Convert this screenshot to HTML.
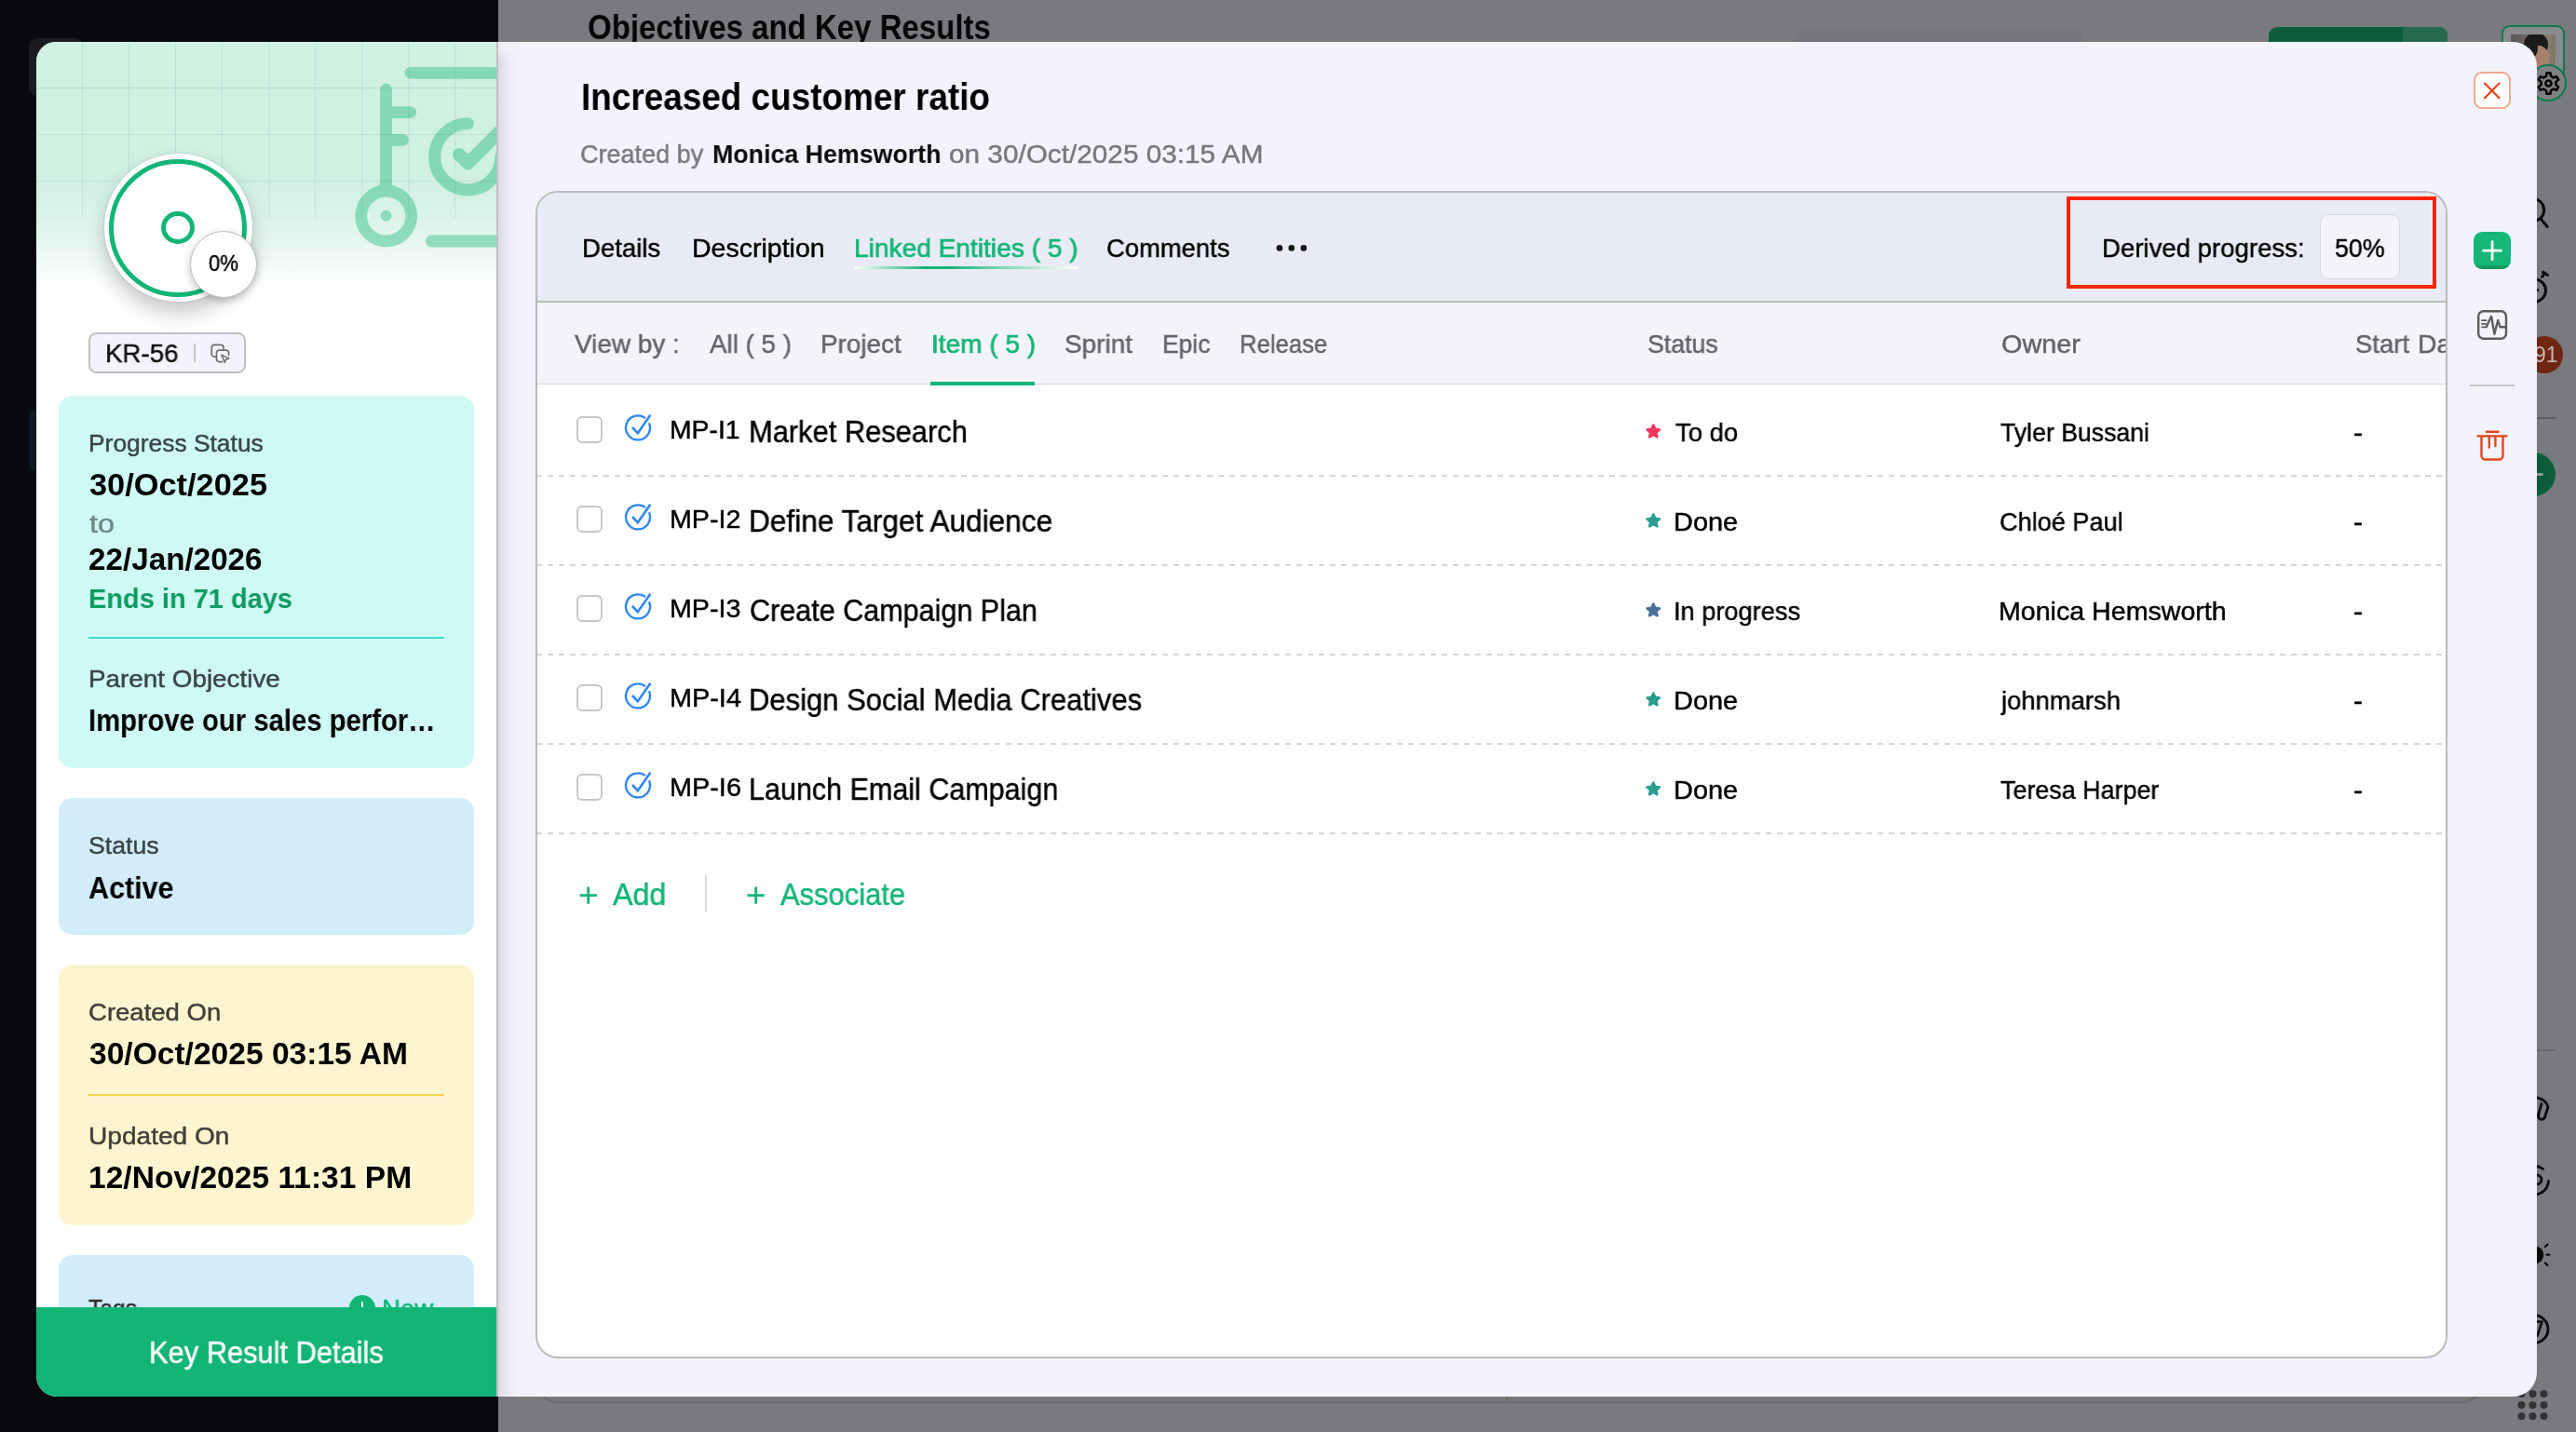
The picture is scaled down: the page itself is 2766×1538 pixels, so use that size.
<!DOCTYPE html>
<html><head><meta charset="utf-8"><title>Key Result</title>
<style>
html,body{margin:0;padding:0;background:#797a7e;}
body{width:2766px;height:1538px;overflow:hidden;position:relative;font-family:"Liberation Sans",sans-serif;}
*{box-sizing:border-box;}
.a{position:absolute;}
.g{position:absolute;width:2766px;height:1538px;}
.t{position:absolute;white-space:nowrap;line-height:1;transform-origin:0 0;will-change:transform;}
svg{position:absolute;overflow:visible;}
.dash{position:absolute;left:577px;width:2051px;height:2px;background:repeating-linear-gradient(90deg,#d5d5d5 0,#d5d5d5 6px,transparent 6px,transparent 12px);background-position:-1px 0;}
.cb{position:absolute;left:618.9px;top:447.2px;width:28px;height:28.6px;border:2.3px solid #c6c6c6;border-radius:6px;background:#fff;}
</style></head>
<body>
<!-- ======== underlying page (darkened by overlay) ======== -->
<div class="a" style="left:0;top:0;width:534.7px;height:1538px;background:#08090f;"></div>
<div class="a" style="left:31.1px;top:40.7px;width:60.3px;height:63.4px;border-radius:11px;background:#1a1b20;"></div>
<div class="a" style="left:31.2px;top:437.8px;width:20px;height:69.7px;border-radius:10px 0 0 10px;background:#0c1822;"></div>
<span id="t0" class="t" style="left:630.69px;top:12.26px;font-size:36.2px;color:#050505;font-weight:700;transform:scaleX(0.9119);">Objectives and Key Results</span>
<div class="a" style="left:1929px;top:30px;width:307px;height:40px;border-radius:10px;background:#75767a;"></div>
<div class="a" style="left:2436px;top:29px;width:192px;height:40px;border-radius:9px;background:#0d5c3a;overflow:hidden;">
  <div class="a" style="left:144px;top:0;width:48px;height:40px;background:#27694e;"></div>
</div>
<!-- avatar -->
<div class="a" style="left:2686px;top:27px;width:68px;height:74px;border-radius:9px;border:2.2px solid #0e7a4c;background:#8a8b8e;"></div>
<div class="a" style="left:2696.3px;top:37.2px;width:47.6px;height:60px;background:linear-gradient(90deg,#5f5757 0%,#6a6261 30%,#8c8172 75%,#7d7468 100%);overflow:hidden;">
  <div class="a" style="left:14px;top:-2px;width:26px;height:26px;border-radius:50%;background:#1d1a1b;"></div>
  <div class="a" style="left:17px;top:12px;width:24px;height:30px;border-radius:45%;background:#a8806c;"></div>
  <div class="a" style="left:13px;top:4px;width:16px;height:22px;border-radius:50%;background:#1d1a1b;"></div>
</div>
<div class="a" style="left:2716px;top:69px;width:40px;height:40px;border-radius:50%;border:2.4px solid #0e7a4c;background:#808083;"></div>
<svg style="left:2716.5px;top:69.8px;" width="39" height="39" viewBox="0 0 42 42" fill="none" stroke="#050505" stroke-width="2.8" stroke-linejoin="round"><path d="M18.20 12.87 L18.88 8.99 L23.12 8.99 L23.80 12.87 L26.64 14.51 L30.35 13.16 L32.46 16.83 L29.44 19.36 L29.44 22.64 L32.46 25.17 L30.35 28.84 L26.64 27.49 L23.80 29.13 L23.12 33.01 L18.88 33.01 L18.20 29.13 L15.36 27.49 L11.65 28.84 L9.54 25.17 L12.56 22.64 L12.56 19.36 L9.54 16.83 L11.65 13.16 L15.36 14.51Z"/><circle cx="21" cy="21" r="3.3"/></svg>
<!-- right rail icons (only slivers visible) -->
<svg style="left:0;top:0;" width="2766" height="460" viewBox="0 0 2766 460" fill="none" stroke="#0a0a0a" stroke-width="3" stroke-linecap="round"><circle cx="2719.7" cy="225.5" r="12"/><path d="M2728 234.8L2735.2 243.5"/><circle cx="2721.5" cy="312" r="12"/><path d="M2729.5 297.5L2732.5 293M2730.5 292.2L2735.5 295.4"/><circle cx="2725" cy="311.5" r="1.4" fill="#0a0a0a" stroke="none"/></svg>
<div class="a" style="left:2711.7px;top:360.9px;width:40.2px;height:40.2px;border-radius:50%;background:#6f2612;"></div>
<span class="t" style="left:2720.9px;top:369.9px;font-size:23px;color:#c9b3ad;">91</span>
<div class="a" style="left:2724px;top:447.8px;width:19.7px;height:2px;background:#5c5d60;"></div>
<div class="a" style="left:2697px;top:485.5px;width:47px;height:47px;border-radius:50%;background:radial-gradient(circle at 40% 50%,#0a5234 0%,#0d5e3c 70%,#0b5737 100%);"></div>
<div class="a" style="left:2723px;top:507.8px;width:8.2px;height:3px;border-radius:1.5px;background:#8e9e96;"></div>
<div class="a" style="left:2724px;top:1127px;width:20px;height:2px;background:#66676b;"></div>
<svg style="left:0;top:1100px;" width="2766" height="438" viewBox="0 1100 2766 438" fill="none" stroke="#0a0a0a" stroke-width="2.8" stroke-linecap="round" stroke-linejoin="round">
<path d="M2712 1180c9-4 22 0 24 9l-3.5 11c-2 4-7.5 2.500-7-2.500l3.500-12"/>
<path d="M2730.500 1255.500A15.300 15.300 0 1 0 2736.500 1268.500"/><path d="M2724 1262a5 5 0 0 1 0 10"/>
<circle cx="2721.800" cy="1347.700" r="9.500" fill="#0a0a0a" stroke="none"/><path d="M2733 1339l2.500-2.500M2734.500 1347.700h2.800M2733 1356.500l2.500 2.500" stroke-width="2.300"/>
<circle cx="2721" cy="1427.500" r="15"/><path d="M2722.500 1419.500h7l-5 15" stroke-width="2.500"/>
</svg>
<!-- underlying card bottom edge -->
<div class="a" style="left:575px;top:1400px;width:2092px;height:107px;border:2px solid #696a6e;border-radius:0 0 24px 24px;border-top:none;background:#77787c;"></div>
<div class="a" style="left:1617px;top:1490px;width:2px;height:16px;background:#6c6d71;"></div>
<!-- app grid dots -->
<svg style="left:2700px;top:1490px;" width="40" height="40" viewBox="0 0 40 40" fill="#333"><circle cx="7.5" cy="7" r="4"/><circle cx="19.5" cy="7" r="4"/><circle cx="31.5" cy="7" r="4"/><circle cx="7.5" cy="19" r="4"/><circle cx="19.5" cy="19" r="4"/><circle cx="31.5" cy="19" r="4"/><circle cx="7.5" cy="31" r="4"/><circle cx="19.5" cy="31" r="4"/><circle cx="31.5" cy="31" r="4"/></svg>

<!-- ======== left panel ======== -->
<div class="a" id="left" style="left:39px;top:45px;width:494.2px;height:1455px;background:#fff;border-radius:21px 0 0 22px;overflow:hidden;">
<div class="g" style="left:-39px;top:-45px;">
  <div class="a" style="left:39px;top:45px;width:495px;height:300px;background:linear-gradient(180deg,#d0f0e2 0%,#d0f0e2 50%,#daf3e9 63%,#ebf8f3 75%,#ffffff 89%);"></div>
  <!-- key illustration -->
  <svg style="left:0;top:0;opacity:0.395;" width="534" height="400" viewBox="0 0 534 400" fill="none" stroke="#13b576" stroke-width="12.8" stroke-linecap="round" stroke-linejoin="round">
    <path d="M441 78.3H560"/>
    <path d="M414.5 96.2V200"/>
    <path d="M414.5 120.6H440.8"/>
    <path d="M414.5 150.4H432.4"/>
    <circle cx="414.7" cy="232" r="27"/>
    <circle cx="414.5" cy="231.7" r="5.9" fill="#13b576" stroke="none"/>
    <path d="M463.3 259H560"/>
    <path d="M502.5 132.8 A35.6 35.6 0 1 0 537.8 168.4" stroke-width="13.1"/>
    <path d="M493 166.1L502.5 175.4L536 141.9" stroke-width="14"/>
  </svg>
  <!-- grid -->
  <div class="a" style="left:39px;top:45px;width:495px;height:190px;
     background-image:linear-gradient(90deg,rgba(20,90,70,0.10) 0,rgba(20,90,70,0.10) 1px,transparent 1px),linear-gradient(180deg,rgba(20,90,70,0.10) 0,rgba(20,90,70,0.10) 1px,transparent 1px);
     background-size:50.05px 50.05px;background-position:49px 49px;"></div>
  <!-- progress circle -->
  <div class="a" style="left:111.5px;top:165px;width:159px;height:159px;border-radius:50%;background:#fff;box-shadow:0 12px 22px rgba(0,0,0,0.22),0 0 3px rgba(0,0,0,0.12);"></div>
  <div class="a" style="left:117px;top:170.5px;width:148px;height:148px;border-radius:50%;border:5.2px solid #13b576;"></div>
  <div class="a" style="left:173.2px;top:227px;width:35.4px;height:35.4px;border-radius:50%;border:5.2px solid #13b576;"></div>
  <div class="a" style="left:203.7px;top:247.7px;width:72px;height:72px;border-radius:50%;background:#fff;border:1.5px solid #bcbcbc;box-shadow:0 3px 8px rgba(0,0,0,0.25);"></div>
  <!-- KR id -->
  <div class="a" style="left:95px;top:357.1px;width:169px;height:43.6px;border:2px solid #c0c0c2;border-radius:8.5px;background:#f2f3fb;"></div>
  <div class="a" style="left:208px;top:369px;width:2px;height:19.9px;background:#c6c6c8;"></div>
  <svg style="left:224.6px;top:367.6px;" width="25.8" height="25.8" viewBox="0 0 24 24" fill="none" stroke="#6c6d71" stroke-width="1.55" stroke-linejoin="round" stroke-linecap="round"><path d="M6.98 14.05H4.74a2.6 2.6 0 0 1-2.6-2.6V4.74a2.6 2.6 0 0 1 2.6-2.6h6.61a2.6 2.6 0 0 1 2.6 2.6V7.5"/><path d="M12.8 19.16H9.58a2.6 2.6 0 0 1-2.6-2.6V10.13a2.6 2.6 0 0 1 2.6-2.6h6.98a2.6 2.6 0 0 1 2.6 2.6V12.6"/><path d="M11.9 12.2L19.5 15.9L16.2 16.7L15.35 19.9Z" stroke-width="1.4"/></svg>
  <!-- cards -->
  <div class="a" style="left:63px;top:425px;width:445.6px;height:400px;border-radius:15px;background:#cff9f4;"></div>
  <div class="a" style="left:95.2px;top:683.5px;width:382px;height:2.2px;background:#3fd9cb;"></div>
  <div class="a" style="left:63px;top:857px;width:445.6px;height:146.5px;border-radius:15px;background:#d2ecfa;"></div>
  <div class="a" style="left:63px;top:1036px;width:445.6px;height:279.5px;border-radius:15px;background:#fcf5d0;"></div>
  <div class="a" style="left:95.2px;top:1174.5px;width:382px;height:2.2px;background:#f2d44f;"></div>
  <div class="a" style="left:63px;top:1348px;width:445.6px;height:200px;border-radius:15px;background:#d2ecfa;"></div>
  <div class="a" style="left:374.7px;top:1390.9px;width:28.4px;height:28.4px;border-radius:50%;background:#13b576;"></div>
  <div class="a" style="left:388.1px;top:1398.4px;width:2.4px;height:14px;background:#fff;"></div>
  <span id="t49" class="t" style="left:94.83px;top:463.25px;font-size:26.4px;color:#3a4646;font-weight:400;-webkit-text-stroke:0.45px currentColor;transform:scaleX(0.9989);">Progress Status</span>
<span id="t50" class="t" style="left:96.20px;top:505.37px;font-size:32.4px;color:#000;font-weight:700;transform:scaleX(1.0607);">30/Oct/2025</span>
<span id="t51" class="t" style="left:96.27px;top:549.22px;font-size:27.5px;color:#6f8a86;font-weight:400;-webkit-text-stroke:0.45px currentColor;transform:scaleX(1.1778);">to</span>
<span id="t52" class="t" style="left:95.17px;top:585.37px;font-size:32.4px;color:#000;font-weight:700;transform:scaleX(1.0256);">22/Jan/2026</span>
<span id="t53" class="t" style="left:95.19px;top:627.17px;font-size:30.4px;color:#0d9a61;font-weight:700;transform:scaleX(0.9532);">Ends in 71 days</span>
<span id="t54" class="t" style="left:94.73px;top:716.15px;font-size:26.4px;color:#3a4646;font-weight:400;-webkit-text-stroke:0.45px currentColor;transform:scaleX(1.0550);">Parent Objective</span>
<span id="t55" class="t" style="left:95.29px;top:758.47px;font-size:32.4px;color:#000;font-weight:700;transform:scaleX(0.9036);">Improve our sales perfor…</span>
<span id="t56" class="t" style="left:94.82px;top:895.35px;font-size:26.4px;color:#3a4646;font-weight:400;-webkit-text-stroke:0.45px currentColor;transform:scaleX(1.0097);">Status</span>
<span id="t57" class="t" style="left:95.10px;top:937.67px;font-size:32.4px;color:#000;font-weight:700;transform:scaleX(0.9406);">Active</span>
<span id="t58" class="t" style="left:95.09px;top:1074.45px;font-size:26.4px;color:#403f38;font-weight:400;-webkit-text-stroke:0.45px currentColor;transform:scaleX(1.0431);">Created On</span>
<span id="t59" class="t" style="left:96.20px;top:1116.47px;font-size:32.4px;color:#000;font-weight:700;transform:scaleX(1.0362);">30/Oct/2025 03:15 AM</span>
<span id="t60" class="t" style="left:94.71px;top:1206.95px;font-size:26.4px;color:#403f38;font-weight:400;-webkit-text-stroke:0.45px currentColor;transform:scaleX(1.0640);">Updated On</span>
<span id="t61" class="t" style="left:94.73px;top:1248.87px;font-size:32.4px;color:#000;font-weight:700;transform:scaleX(1.0364);">12/Nov/2025 11:31 PM</span>
<span id="t62" class="t" style="left:95.31px;top:1392.35px;font-size:26.4px;color:#2e3033;font-weight:400;-webkit-text-stroke:0.45px currentColor;transform:scaleX(0.9356);">Tags</span>
<span id="t63" class="t" style="left:410.37px;top:1390.94px;font-size:28.3px;color:#13b576;font-weight:400;-webkit-text-stroke:0.45px currentColor;transform:scaleX(0.9744);">New</span>
<span id="t65" class="t" style="left:112.76px;top:365.44px;font-size:28.3px;color:#111;font-weight:400;-webkit-text-stroke:0.45px currentColor;transform:scaleX(0.9791);">KR-56</span>
<span id="t66" class="t" style="left:224.22px;top:272.43px;font-size:23px;color:#000;font-weight:400;-webkit-text-stroke:0.45px currentColor;transform:scaleX(0.9594);">0%</span>
  <!-- footer -->
  <div class="a" style="left:39px;top:1404px;width:495px;height:96px;background:#13b576;"></div>
  <span id="t64" class="t" style="left:160.01px;top:1437.26px;font-size:32.3px;color:#fff;font-weight:400;-webkit-text-stroke:0.45px currentColor;transform:scaleX(0.9541);">Key Result Details</span>
</div>
</div>

<!-- ======== modal ======== -->
<div class="a" id="modal" style="left:533px;top:45px;width:2191px;height:1455px;background:#f2f3fc;border-radius:0 26px 26px 0;overflow:hidden;">
<div class="g" style="left:-533px;top:-45px;">
  <div class="a" style="left:534.8px;top:45px;width:22px;height:1455px;background:linear-gradient(90deg,#dbdbe0 0%,#e5e6ec 28%,#edeef6 60%,#f2f3fc 100%);-webkit-mask-image:linear-gradient(180deg,transparent 0,#000 22px);mask-image:linear-gradient(180deg,transparent 0,#000 22px);"></div>
  <div class="a" style="left:533px;top:45px;width:1.9px;height:1455px;background:#c0bfc2;"></div>
  <!-- close -->
  <div class="a" style="left:2656.2px;top:77.2px;width:39.7px;height:39.5px;border:2.2px solid #f1a78f;border-radius:9px;background:#fff;"></div>
  <svg style="left:2656.3px;top:77.6px;" width="39.6" height="39" viewBox="0 0 39.6 39" fill="none" stroke="#e0481e" stroke-width="2.3" stroke-linecap="round"><path d="M12 11.5L27.5 27.2M27.5 11.5L12 27.2"/></svg>
  <!-- plus button -->
  <div class="a" style="left:2655.9px;top:249px;width:40.2px;height:39.8px;border-radius:9px;background:linear-gradient(180deg,#17b877 0%,#15b575 88%,#0e9a60 94%,#0c8f59 100%);"></div>
  <svg style="left:2655.9px;top:249px;" width="40.2" height="39.8" viewBox="0 0 40.2 39.8" fill="none" stroke="#fff" stroke-width="2.7" stroke-linecap="round"><path d="M20.1 10.6V29.8M10.5 20.2H29.7"/></svg>
  <!-- activity icon -->
  <svg style="left:2660px;top:333px;" width="32.2" height="32" viewBox="0 0 32.2 32" fill="none" stroke="#5b5c5f" stroke-width="2.4" stroke-linecap="round" stroke-linejoin="round"><rect x="1.2" y="1.2" width="29.8" height="29.6" rx="5.5"/><path d="M5 11.2h4.6M5 14.8h4M5 18.3h4.8" stroke-width="1.8"/><path d="M9.8 18.1L15.1 6.8L18.4 25.8L22.2 11L24.6 18.3H30.5"/></svg>
  <div class="a" style="left:2652px;top:413px;width:48px;height:2px;background:#c2c2c5;"></div>
  <!-- trash -->
  <svg style="left:2659px;top:461px;" width="34" height="36" viewBox="0 0 34 36" fill="none" stroke="#e0481e" stroke-width="2.4" stroke-linecap="round" stroke-linejoin="round"><path d="M11 2.7h12.5"/><path d="M1.5 7.4h31"/><path d="M5.5 8v20.5a4 4 0 0 0 4 4h15a4 4 0 0 0 4-4V8"/><path d="M13.8 8v11.5M20.4 8v10"/></svg>
  <!-- card -->
  <div class="a" id="card" style="left:575.2px;top:205.2px;width:2052.6px;height:1253.6px;border:2px solid #bababa;border-radius:24px;background:#fff;overflow:hidden;">
  <div class="g" style="left:-577.2px;top:-207.2px;">
    <div class="a" style="left:575px;top:205px;width:2055px;height:118px;background:#e8ebf5;"></div>
    <div class="a" style="left:575px;top:322.7px;width:2055px;height:2.2px;background:#bcbcbc;"></div>
    <div class="a" style="left:575px;top:324.9px;width:2055px;height:87.6px;background:#f3f4f8;"></div>
    <div class="a" style="left:575px;top:411.6px;width:2055px;height:1.8px;background:#d8d9dc;"></div>
    <div class="a" style="left:999px;top:409.5px;width:112px;height:4.6px;background:#13b576;"></div>
    <div class="a" style="left:917px;top:286px;width:240px;height:2.9px;background:linear-gradient(90deg,#ffffff 0%,#a5e3c9 12%,#13b576 32%,#13b576 42%,#8ddbb9 70%,#e4f5ee 92%,#ffffff 100%);"></div>
    <svg style="left:1365px;top:258px;" width="45" height="16" viewBox="0 0 45 16" fill="#111"><circle cx="8.9" cy="8.4" r="3.3"/><circle cx="21.8" cy="8.4" r="3.3"/><circle cx="34.8" cy="8.4" r="3.3"/></svg>
    <!-- derived progress highlight -->
    <div class="a" style="left:2490.7px;top:229.6px;width:86.3px;height:70.2px;border:1.6px solid #d9d9dc;border-radius:9px;background:#f3f4f8;"></div>
    <div class="a" style="left:2218.9px;top:211.4px;width:397.6px;height:98.6px;border:4.1px solid #fb2408;"></div>
    <span id="t20" class="t" style="left:2528.95px;top:354.54px;font-size:28.3px;color:#626367;font-weight:400;-webkit-text-stroke:0.45px currentColor;transform:scaleX(0.9705);">Start</span>
<span id="t21" class="t" style="left:2595.62px;top:354.54px;font-size:28.3px;color:#626367;font-weight:400;-webkit-text-stroke:0.45px currentColor;transform:scaleX(1.0018);">Date</span>
    <div class="a" style="left:0;top:0px;width:2766px;height:0;">
  <div class="dash" style="top:510.4px;"></div>
  <div class="cb"></div>
  <svg style="left:668px;top:442px;" width="36" height="36" viewBox="0 0 36 36" fill="none" stroke="#2f86f6" stroke-width="2.4" stroke-linecap="round" stroke-linejoin="round"><path d="M24.2 6.6A13 13 0 1 0 29.3 13.2"/><path d="M11 17L16.8 23.2L30.4 3.8" stroke-width="2.6" stroke-linecap="butt" stroke-linejoin="miter"/></svg>
  <svg style="left:1765.8px;top:453.6px;" width="18.6" height="18.6" viewBox="0 0 20 20" fill="#f5365c" stroke="#f5365c" stroke-width="2.6" stroke-linejoin="round"><path d="M10 2.6l2.2 4.7 5.1.6-3.8 3.5 1 5.1-4.5-2.6-4.5 2.6 1-5.1L2.7 7.9l5.1-.6z"/></svg>
</div>

<div class="a" style="left:0;top:96px;width:2766px;height:0;">
  <div class="dash" style="top:510.4px;"></div>
  <div class="cb"></div>
  <svg style="left:668px;top:442px;" width="36" height="36" viewBox="0 0 36 36" fill="none" stroke="#2f86f6" stroke-width="2.4" stroke-linecap="round" stroke-linejoin="round"><path d="M24.2 6.6A13 13 0 1 0 29.3 13.2"/><path d="M11 17L16.8 23.2L30.4 3.8" stroke-width="2.6" stroke-linecap="butt" stroke-linejoin="miter"/></svg>
  <svg style="left:1765.8px;top:453.6px;" width="18.6" height="18.6" viewBox="0 0 20 20" fill="#2a9d8f" stroke="#2a9d8f" stroke-width="2.6" stroke-linejoin="round"><path d="M10 2.6l2.2 4.7 5.1.6-3.8 3.5 1 5.1-4.5-2.6-4.5 2.6 1-5.1L2.7 7.9l5.1-.6z"/></svg>
</div>

<div class="a" style="left:0;top:192px;width:2766px;height:0;">
  <div class="dash" style="top:510.4px;"></div>
  <div class="cb"></div>
  <svg style="left:668px;top:442px;" width="36" height="36" viewBox="0 0 36 36" fill="none" stroke="#2f86f6" stroke-width="2.4" stroke-linecap="round" stroke-linejoin="round"><path d="M24.2 6.6A13 13 0 1 0 29.3 13.2"/><path d="M11 17L16.8 23.2L30.4 3.8" stroke-width="2.6" stroke-linecap="butt" stroke-linejoin="miter"/></svg>
  <svg style="left:1765.8px;top:453.6px;" width="18.6" height="18.6" viewBox="0 0 20 20" fill="#4a6f9c" stroke="#4a6f9c" stroke-width="2.6" stroke-linejoin="round"><path d="M10 2.6l2.2 4.7 5.1.6-3.8 3.5 1 5.1-4.5-2.6-4.5 2.6 1-5.1L2.7 7.9l5.1-.6z"/></svg>
</div>

<div class="a" style="left:0;top:288px;width:2766px;height:0;">
  <div class="dash" style="top:510.4px;"></div>
  <div class="cb"></div>
  <svg style="left:668px;top:442px;" width="36" height="36" viewBox="0 0 36 36" fill="none" stroke="#2f86f6" stroke-width="2.4" stroke-linecap="round" stroke-linejoin="round"><path d="M24.2 6.6A13 13 0 1 0 29.3 13.2"/><path d="M11 17L16.8 23.2L30.4 3.8" stroke-width="2.6" stroke-linecap="butt" stroke-linejoin="miter"/></svg>
  <svg style="left:1765.8px;top:453.6px;" width="18.6" height="18.6" viewBox="0 0 20 20" fill="#2a9d8f" stroke="#2a9d8f" stroke-width="2.6" stroke-linejoin="round"><path d="M10 2.6l2.2 4.7 5.1.6-3.8 3.5 1 5.1-4.5-2.6-4.5 2.6 1-5.1L2.7 7.9l5.1-.6z"/></svg>
</div>

<div class="a" style="left:0;top:384px;width:2766px;height:0;">
  <div class="dash" style="top:510.4px;"></div>
  <div class="cb"></div>
  <svg style="left:668px;top:442px;" width="36" height="36" viewBox="0 0 36 36" fill="none" stroke="#2f86f6" stroke-width="2.4" stroke-linecap="round" stroke-linejoin="round"><path d="M24.2 6.6A13 13 0 1 0 29.3 13.2"/><path d="M11 17L16.8 23.2L30.4 3.8" stroke-width="2.6" stroke-linecap="butt" stroke-linejoin="miter"/></svg>
  <svg style="left:1765.8px;top:453.6px;" width="18.6" height="18.6" viewBox="0 0 20 20" fill="#2a9d8f" stroke="#2a9d8f" stroke-width="2.6" stroke-linejoin="round"><path d="M10 2.6l2.2 4.7 5.1.6-3.8 3.5 1 5.1-4.5-2.6-4.5 2.6 1-5.1L2.7 7.9l5.1-.6z"/></svg>
</div>

    <!-- add / associate -->
    <svg style="left:621.5px;top:952px;" width="20" height="20" viewBox="0 0 20 20" fill="none" stroke="#13b576" stroke-width="2.8"><path d="M9.7 0.6V18.8M0.6 9.7H18.8"/></svg>
    <svg style="left:801.5px;top:952px;" width="20" height="20" viewBox="0 0 20 20" fill="none" stroke="#13b576" stroke-width="2.8"><path d="M9.7 0.6V18.8M0.6 9.7H18.8"/></svg>
    <div class="a" style="left:757.3px;top:940px;width:1.6px;height:39.5px;background:#d9d9dc;"></div>
  </div>
  </div>
  <span id="t1" class="t" style="left:623.69px;top:83.66px;font-size:40.8px;color:#000;font-weight:700;transform:scaleX(0.9046);">Increased customer ratio</span>
<span id="t2" class="t" style="left:623.26px;top:151.44px;font-size:28.3px;color:#77787c;font-weight:400;-webkit-text-stroke:0.45px currentColor;transform:scaleX(0.9551);">Created by</span>
<span id="t3" class="t" style="left:765.35px;top:151.44px;font-size:28.3px;color:#0a0a0a;font-weight:700;transform:scaleX(0.9461);">Monica Hemsworth</span>
<span id="t4" class="t" style="left:1018.59px;top:151.44px;font-size:28.3px;color:#77787c;font-weight:400;-webkit-text-stroke:0.45px currentColor;transform:scaleX(1.0514);">on 30/Oct/2025 03:15 AM</span>
<span id="t5" class="t" style="left:625.07px;top:251.64px;font-size:28.3px;color:#000;font-weight:400;-webkit-text-stroke:0.45px currentColor;transform:scaleX(0.9740);">Details</span>
<span id="t6" class="t" style="left:742.51px;top:251.64px;font-size:28.3px;color:#000;font-weight:400;-webkit-text-stroke:0.45px currentColor;transform:scaleX(1.0075);">Description</span>
<span id="t7" class="t" style="left:916.56px;top:251.64px;font-size:28.3px;color:#13b576;font-weight:400;-webkit-text-stroke:0.7px currentColor;transform:scaleX(0.9933);">Linked Entities ( 5 )</span>
<span id="t8" class="t" style="left:1187.85px;top:251.64px;font-size:28.3px;color:#000;font-weight:400;-webkit-text-stroke:0.45px currentColor;transform:scaleX(0.9683);">Comments</span>
<span id="t9" class="t" style="left:2257.27px;top:251.64px;font-size:28.3px;color:#000;font-weight:400;-webkit-text-stroke:0.45px currentColor;transform:scaleX(0.9745);">Derived progress:</span>
<span id="t10" class="t" style="left:2506.97px;top:251.67px;font-size:28.5px;color:#000;font-weight:400;-webkit-text-stroke:0.45px currentColor;transform:scaleX(0.9402);">50%</span>
<span id="t11" class="t" style="left:617.22px;top:354.54px;font-size:28.3px;color:#626367;font-weight:400;-webkit-text-stroke:0.45px currentColor;transform:scaleX(0.9860);">View by :</span>
<span id="t12" class="t" style="left:761.62px;top:354.54px;font-size:28.3px;color:#626367;font-weight:400;-webkit-text-stroke:0.45px currentColor;transform:scaleX(0.9814);">All ( 5 )</span>
<span id="t13" class="t" style="left:880.75px;top:354.54px;font-size:28.3px;color:#626367;font-weight:400;-webkit-text-stroke:0.45px currentColor;transform:scaleX(0.9854);">Project</span>
<span id="t14" class="t" style="left:999.97px;top:354.54px;font-size:28.3px;color:#13b576;font-weight:400;-webkit-text-stroke:0.7px currentColor;transform:scaleX(0.9902);">Item ( 5 )</span>
<span id="t15" class="t" style="left:1143.13px;top:354.54px;font-size:28.3px;color:#626367;font-weight:400;-webkit-text-stroke:0.45px currentColor;transform:scaleX(0.9890);">Sprint</span>
<span id="t16" class="t" style="left:1248.14px;top:354.54px;font-size:28.3px;color:#626367;font-weight:400;-webkit-text-stroke:0.45px currentColor;transform:scaleX(0.9354);">Epic</span>
<span id="t17" class="t" style="left:1331.39px;top:354.54px;font-size:28.3px;color:#626367;font-weight:400;-webkit-text-stroke:0.45px currentColor;transform:scaleX(0.9080);">Release</span>
<span id="t18" class="t" style="left:1768.67px;top:354.54px;font-size:28.3px;color:#626367;font-weight:400;-webkit-text-stroke:0.45px currentColor;transform:scaleX(0.9442);">Status</span>
<span id="t19" class="t" style="left:2148.91px;top:354.54px;font-size:28.3px;color:#626367;font-weight:400;-webkit-text-stroke:0.45px currentColor;transform:scaleX(1.0186);">Owner</span>
<span id="t22" class="t" style="left:718.82px;top:447.04px;font-size:28.3px;color:#000;font-weight:400;-webkit-text-stroke:0.45px currentColor;transform:scaleX(1.0016);">MP-I1</span>
<span id="t23" class="t" style="left:804.30px;top:447.76px;font-size:32.3px;color:#000;font-weight:400;-webkit-text-stroke:0.45px currentColor;transform:scaleX(0.9551);">Market Research</span>
<span id="t24" class="t" style="left:1799.42px;top:449.84px;font-size:28.3px;color:#000;font-weight:400;-webkit-text-stroke:0.45px currentColor;transform:scaleX(0.9703);">To do</span>
<span id="t25" class="t" style="left:2147.81px;top:449.84px;font-size:28.3px;color:#000;font-weight:400;-webkit-text-stroke:0.45px currentColor;transform:scaleX(0.9419);">Tyler Bussani</span>
<span id="t26" class="t" style="left:2527.18px;top:449.84px;font-size:28.3px;color:#000;font-weight:400;-webkit-text-stroke:0.45px currentColor;transform:scaleX(1.0633);">-</span>
<span id="t27" class="t" style="left:718.80px;top:543.04px;font-size:28.3px;color:#000;font-weight:400;-webkit-text-stroke:0.45px currentColor;transform:scaleX(1.0126);">MP-I2</span>
<span id="t28" class="t" style="left:804.26px;top:543.76px;font-size:32.3px;color:#000;font-weight:400;-webkit-text-stroke:0.45px currentColor;transform:scaleX(0.9783);">Define Target Audience</span>
<span id="t29" class="t" style="left:1797.38px;top:545.84px;font-size:28.3px;color:#000;font-weight:400;-webkit-text-stroke:0.45px currentColor;transform:scaleX(1.0234);">Done</span>
<span id="t30" class="t" style="left:2146.86px;top:545.84px;font-size:28.3px;color:#000;font-weight:400;-webkit-text-stroke:0.45px currentColor;transform:scaleX(0.9575);">Chloé Paul</span>
<span id="t31" class="t" style="left:2527.18px;top:545.84px;font-size:28.3px;color:#000;font-weight:400;-webkit-text-stroke:0.45px currentColor;transform:scaleX(1.0633);">-</span>
<span id="t32" class="t" style="left:718.80px;top:639.04px;font-size:28.3px;color:#000;font-weight:400;-webkit-text-stroke:0.45px currentColor;transform:scaleX(1.0126);">MP-I3</span>
<span id="t33" class="t" style="left:805.27px;top:639.76px;font-size:32.3px;color:#000;font-weight:400;-webkit-text-stroke:0.45px currentColor;transform:scaleX(0.9456);">Create Campaign Plan</span>
<span id="t34" class="t" style="left:1797.49px;top:641.84px;font-size:28.3px;color:#000;font-weight:400;-webkit-text-stroke:0.45px currentColor;transform:scaleX(0.9616);">In progress</span>
<span id="t35" class="t" style="left:2145.81px;top:641.84px;font-size:28.3px;color:#000;font-weight:400;-webkit-text-stroke:0.45px currentColor;transform:scaleX(1.0105);">Monica Hemsworth</span>
<span id="t36" class="t" style="left:2527.18px;top:641.84px;font-size:28.3px;color:#000;font-weight:400;-webkit-text-stroke:0.45px currentColor;transform:scaleX(1.0633);">-</span>
<span id="t37" class="t" style="left:718.79px;top:735.04px;font-size:28.3px;color:#000;font-weight:400;-webkit-text-stroke:0.45px currentColor;transform:scaleX(1.0194);">MP-I4</span>
<span id="t38" class="t" style="left:804.30px;top:735.76px;font-size:32.3px;color:#000;font-weight:400;-webkit-text-stroke:0.45px currentColor;transform:scaleX(0.9597);">Design Social Media Creatives</span>
<span id="t39" class="t" style="left:1797.38px;top:737.84px;font-size:28.3px;color:#000;font-weight:400;-webkit-text-stroke:0.45px currentColor;transform:scaleX(1.0234);">Done</span>
<span id="t40" class="t" style="left:2148.79px;top:737.84px;font-size:28.3px;color:#000;font-weight:400;-webkit-text-stroke:0.45px currentColor;transform:scaleX(0.9686);">johnmarsh</span>
<span id="t41" class="t" style="left:2527.18px;top:737.84px;font-size:28.3px;color:#000;font-weight:400;-webkit-text-stroke:0.45px currentColor;transform:scaleX(1.0633);">-</span>
<span id="t42" class="t" style="left:718.79px;top:831.04px;font-size:28.3px;color:#000;font-weight:400;-webkit-text-stroke:0.45px currentColor;transform:scaleX(1.0194);">MP-I6</span>
<span id="t43" class="t" style="left:804.32px;top:831.76px;font-size:32.3px;color:#000;font-weight:400;-webkit-text-stroke:0.45px currentColor;transform:scaleX(0.9444);">Launch Email Campaign</span>
<span id="t44" class="t" style="left:1797.38px;top:833.84px;font-size:28.3px;color:#000;font-weight:400;-webkit-text-stroke:0.45px currentColor;transform:scaleX(1.0234);">Done</span>
<span id="t45" class="t" style="left:2147.81px;top:833.84px;font-size:28.3px;color:#000;font-weight:400;-webkit-text-stroke:0.45px currentColor;transform:scaleX(0.9502);">Teresa Harper</span>
<span id="t46" class="t" style="left:2527.18px;top:833.84px;font-size:28.3px;color:#000;font-weight:400;-webkit-text-stroke:0.45px currentColor;transform:scaleX(1.0633);">-</span>
<span id="t47" class="t" style="left:657.72px;top:945.37px;font-size:32.4px;color:#13b576;font-weight:400;-webkit-text-stroke:0.45px currentColor;transform:scaleX(0.9951);">Add</span>
<span id="t48" class="t" style="left:838.11px;top:945.37px;font-size:32.4px;color:#13b576;font-weight:400;-webkit-text-stroke:0.45px currentColor;transform:scaleX(0.9544);">Associate</span>
</div>
</div>
</body></html>
